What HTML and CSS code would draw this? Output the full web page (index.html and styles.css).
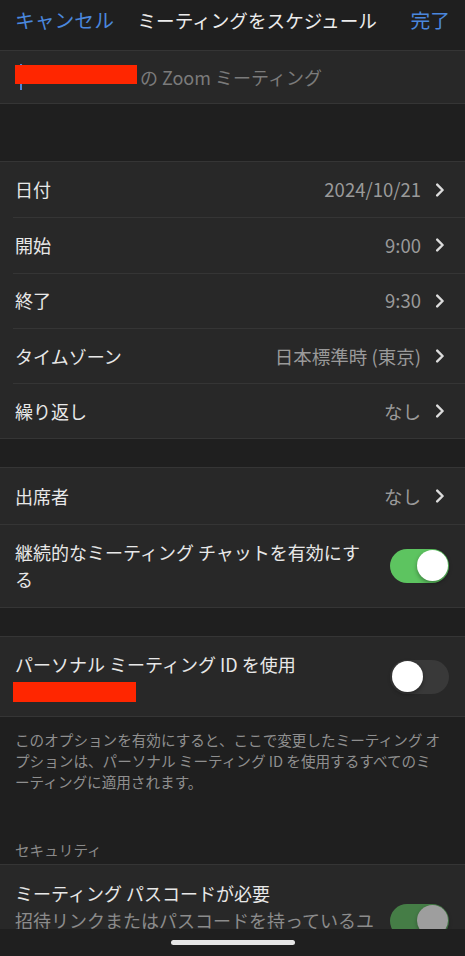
FILE: index.html
```html
<!DOCTYPE html>
<html lang="ja">
<head>
    <meta charset="UTF-8">
    <meta name="viewport" content="width=device-width, initial-scale=1.0">
    <title>ミーティングをスケジュール</title>
    <link rel="stylesheet" href="styles.css">
</head>
<body>
<div class="screen">
    <div class="nav">
        <span class="nav-btn">キャンセル</span>
        <span class="nav-title">ミーティングをスケジュール</span>
        <span class="nav-btn">完了</span>
    </div>

    <div class="content">
        <div class="group topic">
            <span class="cursor"></span><span class="redact"></span>
            <span class="topic-text">の Zoom ミーティング</span>
        </div>

        <div class="spacer spacer-big"></div>

        <div class="group">
            <div class="row">
                <span class="row-label">日付</span>
                <span class="row-value">2024/10/21</span>
                <svg class="chevron" viewBox="0 0 10 14"><path d="M2.2 1.6 L7.6 7 L2.2 12.4"/></svg>
            </div>
            <div class="row">
                <span class="row-label">開始</span>
                <span class="row-value">9:00</span>
                <svg class="chevron" viewBox="0 0 10 14"><path d="M2.2 1.6 L7.6 7 L2.2 12.4"/></svg>
            </div>
            <div class="row">
                <span class="row-label">終了</span>
                <span class="row-value">9:30</span>
                <svg class="chevron" viewBox="0 0 10 14"><path d="M2.2 1.6 L7.6 7 L2.2 12.4"/></svg>
            </div>
            <div class="row">
                <span class="row-label">タイムゾーン</span>
                <span class="row-value">日本標準時 (東京)</span>
                <svg class="chevron" viewBox="0 0 10 14"><path d="M2.2 1.6 L7.6 7 L2.2 12.4"/></svg>
            </div>
            <div class="row">
                <span class="row-label">繰り返し</span>
                <span class="row-value">なし</span>
                <svg class="chevron" viewBox="0 0 10 14"><path d="M2.2 1.6 L7.6 7 L2.2 12.4"/></svg>
            </div>
        </div>

        <div class="spacer"></div>

        <div class="group full-sep">
            <div class="row">
                <span class="row-label">出席者</span>
                <span class="row-value">なし</span>
                <svg class="chevron" viewBox="0 0 10 14"><path d="M2.2 1.6 L7.6 7 L2.2 12.4"/></svg>
            </div>
            <div class="row row-switch chat-row">
                <span class="row-label">継続的なミーティング チャットを有効にする</span>
                <span class="toggle on"></span>
            </div>
        </div>

        <div class="spacer"></div>

        <div class="group">
            <div class="row row-switch pmi-row">
                <div class="row-label">
                    <div>パーソナル ミーティング ID を使用</div>
                    <div class="redact redact-id"></div>
                </div>
                <span class="toggle"></span>
            </div>
        </div>

        <p class="note">このオプションを有効にすると、ここで変更したミーティング オプションは、パーソナル ミーティング ID を使用するすべてのミーティングに適用されます。</p>

        <div class="section-title">セキュリティ</div>

        <div class="group">
            <div class="row row-switch pass-row">
                <div class="row-label">
                    <div>ミーティング パスコードが必要</div>
                    <div class="row-sub">招待リンクまたはパスコードを持っているユーザーのみがミーティングに参加できます</div>
                </div>
                <span class="toggle on disabled"></span>
            </div>
        </div>
    </div>

    <div class="home-bar"><span class="home-indicator"></span></div>
</div>
</body>
</html>
```

FILE: styles.css
```css
* {
    box-sizing: border-box;
}

body {
    margin: 0;
    background-color: #1f1f1f;
    color: #e8e8e8;
    font-family: "Noto Sans CJK JP", sans-serif;
}

.screen {
    display: flex;
    flex-direction: column;
    height: 956px;
    overflow: hidden;
}

/* barre du haut */
.nav {
    flex-shrink: 0;
    height: 50px;
    display: flex;
    justify-content: space-between;
    align-items: flex-start;
    padding: 6px 15px 0 15px;
}

.nav-btn {
    color: #4a87dd;
    font-size: 19.8px;
    line-height: 28px;
}

.nav-title {
    color: #ececec;
    font-size: 18.6px;
    line-height: 28px;
    margin-right: 10px;
}

.content {
    flex: 1;
    overflow: hidden;
}

.group {
    background-color: #282828;
    border-top: 1px solid #353535;
    border-bottom: 1px solid #353535;
}

.spacer {
    height: 28px;
}

.spacer-big {
    height: 57px;
}

/* sujet */
.topic {
    height: 54px;
    display: flex;
    align-items: center;
    padding-left: 15px;
    font-size: 18px;
}

.cursor {
    width: 2px;
    height: 26px;
    margin-left: 5px;
    margin-right: -7px;
    background-color: #4a87dd;
}

.redact {
    display: inline-block;
    width: 122px;
    height: 19px;
    margin-top: -5px;
    background-color: #ff2600;
}

.topic-text {
    color: #7b7b7b;
    margin-left: 3px;
    line-height: 26px;
}

/* lignes */
.row {
    display: flex;
    align-items: center;
    min-height: 55.3px;
    margin-left: 13px;
    padding: 0 20px 0 2px;
    font-size: 18px;
    line-height: 27px;
}

.row + .row {
    border-top: 1px solid #353535;
}

.full-sep .row {
    margin-left: 0;
    padding-left: 15px;
}

.row-label {
    flex: 1;
    color: #e8e8e8;
}

.row-value {
    color: #9a9a9a;
    font-size: 18.5px;
    margin-right: 14px;
}

.chevron {
    width: 10px;
    height: 14px;
    fill: none;
    stroke: #dcdcdc;
    stroke-width: 2.4;
    stroke-linecap: round;
    stroke-linejoin: round;
}

.row-switch {
    padding-right: 16px;
}

.row-switch .row-label {
    margin-right: 12px;
}

.chat-row {
    min-height: 83px;
    padding-top: 14px;
    padding-bottom: 14px;
}

.chat-row .row-label {
    margin-right: 22px;
}

.pmi-row {
    padding-top: 14.5px;
    padding-bottom: 14.5px;
}

.redact-id {
    display: block;
    width: 123px;
    height: 20px;
    margin: 3.5px 0 0 -2px;
}

.pass-row {
    padding-top: 15.5px;
    padding-bottom: 15.5px;
}

.row-sub {
    color: #8c8c8c;
}

/* interrupteurs */
.toggle {
    position: relative;
    flex-shrink: 0;
    width: 59px;
    height: 34px;
    border-radius: 17px;
    background-color: #393939;
}

.toggle::after {
    content: "";
    position: absolute;
    top: 1.5px;
    left: 1.5px;
    width: 31px;
    height: 31px;
    border-radius: 50%;
    background-color: #fff;
    box-shadow: 0 2px 4px rgba(0, 0, 0, 0.35);
}

.toggle.on {
    background-color: #5dc460;
}

.toggle.on::after {
    left: 26.5px;
}

.toggle.disabled {
    opacity: 0.55;
}

.note {
    margin: 0;
    padding: 12px 21px 0 15px;
    font-size: 14.6px;
    line-height: 21px;
    color: #8f8f8f;
}

.section-title {
    padding: 47.5px 15px 4px;
    font-size: 14.6px;
    line-height: 20px;
    color: #8a8a8a;
}

.home-bar {
    flex-shrink: 0;
    height: 27px;
    display: flex;
    justify-content: center;
    padding-top: 11px;
    background-color: #1f1f1f;
}

.home-indicator {
    width: 124px;
    height: 5px;
    border-radius: 3px;
    background-color: #e6e6e6;
}
```
